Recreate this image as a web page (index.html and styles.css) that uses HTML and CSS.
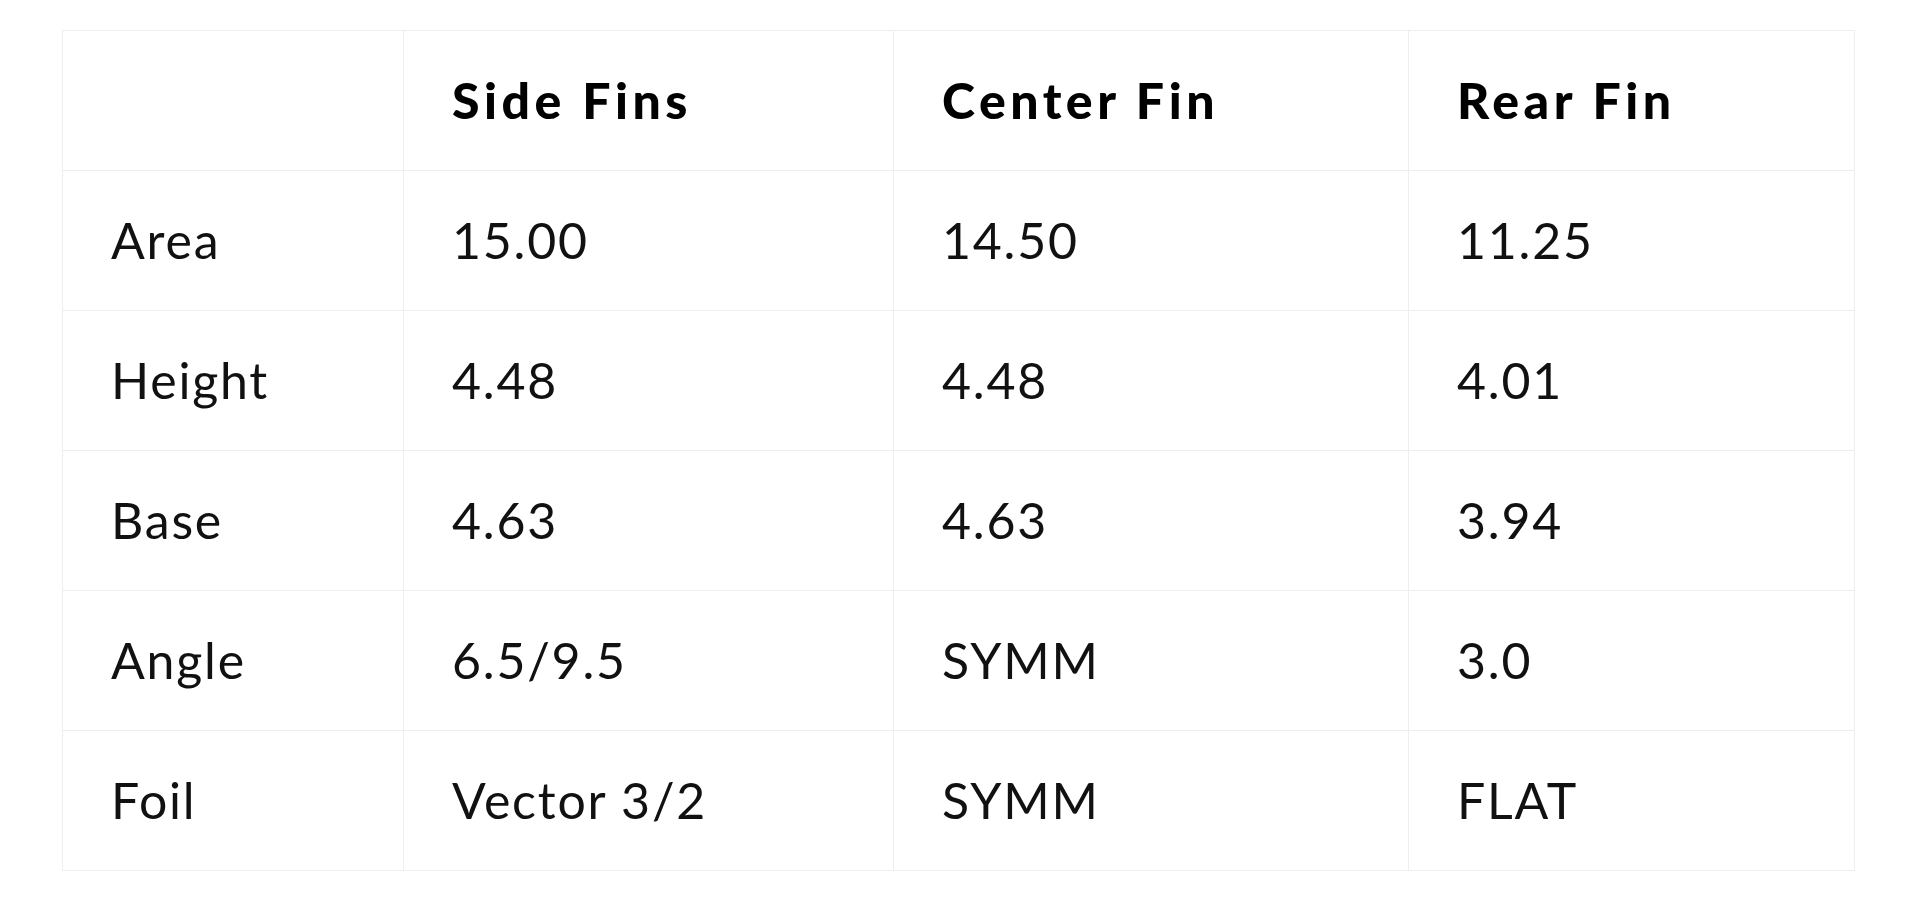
FILE: index.html
```html
<!DOCTYPE html>
<html lang="en">
<head>
<meta charset="utf-8">
<title>Fin Specs</title>
<link rel="stylesheet" href="styles.css">
</head>
<body>
<table class="specs">
  <colgroup>
    <col class="c-label">
    <col class="c-side">
    <col class="c-center">
    <col class="c-rear">
  </colgroup>
  <thead>
    <tr>
      <th></th>
      <th>Side Fins</th>
      <th>Center Fin</th>
      <th>Rear Fin</th>
    </tr>
  </thead>
  <tbody>
    <tr><td>Area</td><td>15.00</td><td>14.50</td><td>11.25</td></tr>
    <tr><td>Height</td><td>4.48</td><td>4.48</td><td>4.01</td></tr>
    <tr><td>Base</td><td>4.63</td><td>4.63</td><td>3.94</td></tr>
    <tr><td>Angle</td><td>6.5/9.5</td><td>SYMM</td><td>3.0</td></tr>
    <tr><td>Foil</td><td>Vector 3/2</td><td>SYMM</td><td>FLAT</td></tr>
  </tbody>
</table>
</body>
</html>
```

FILE: styles.css
```css
html, body {
  margin: 0;
  background: #ffffff;
}
body {
  padding: 30px 0 0 62px;
  font-family: Lato, "Open Sans", sans-serif;
  color: #111111;
}
.specs {
  border-collapse: collapse;
  table-layout: fixed;
  width: 1792px;
}
.c-label { width: 341px; }
.c-side { width: 490px; }
.c-center { width: 515px; }
.c-rear { width: 446px; }
.specs th,
.specs td {
  border: 1px solid #eeeeee;
  padding: 40px 48px;
  line-height: 59px;
  font-size: 50px;
  text-align: left;
  white-space: nowrap;
}
.specs th {
  font-weight: 900;
  color: #000000;
  letter-spacing: 4.5px;
}
.specs td {
  font-weight: 400;
  letter-spacing: 1.8px;
}
```
